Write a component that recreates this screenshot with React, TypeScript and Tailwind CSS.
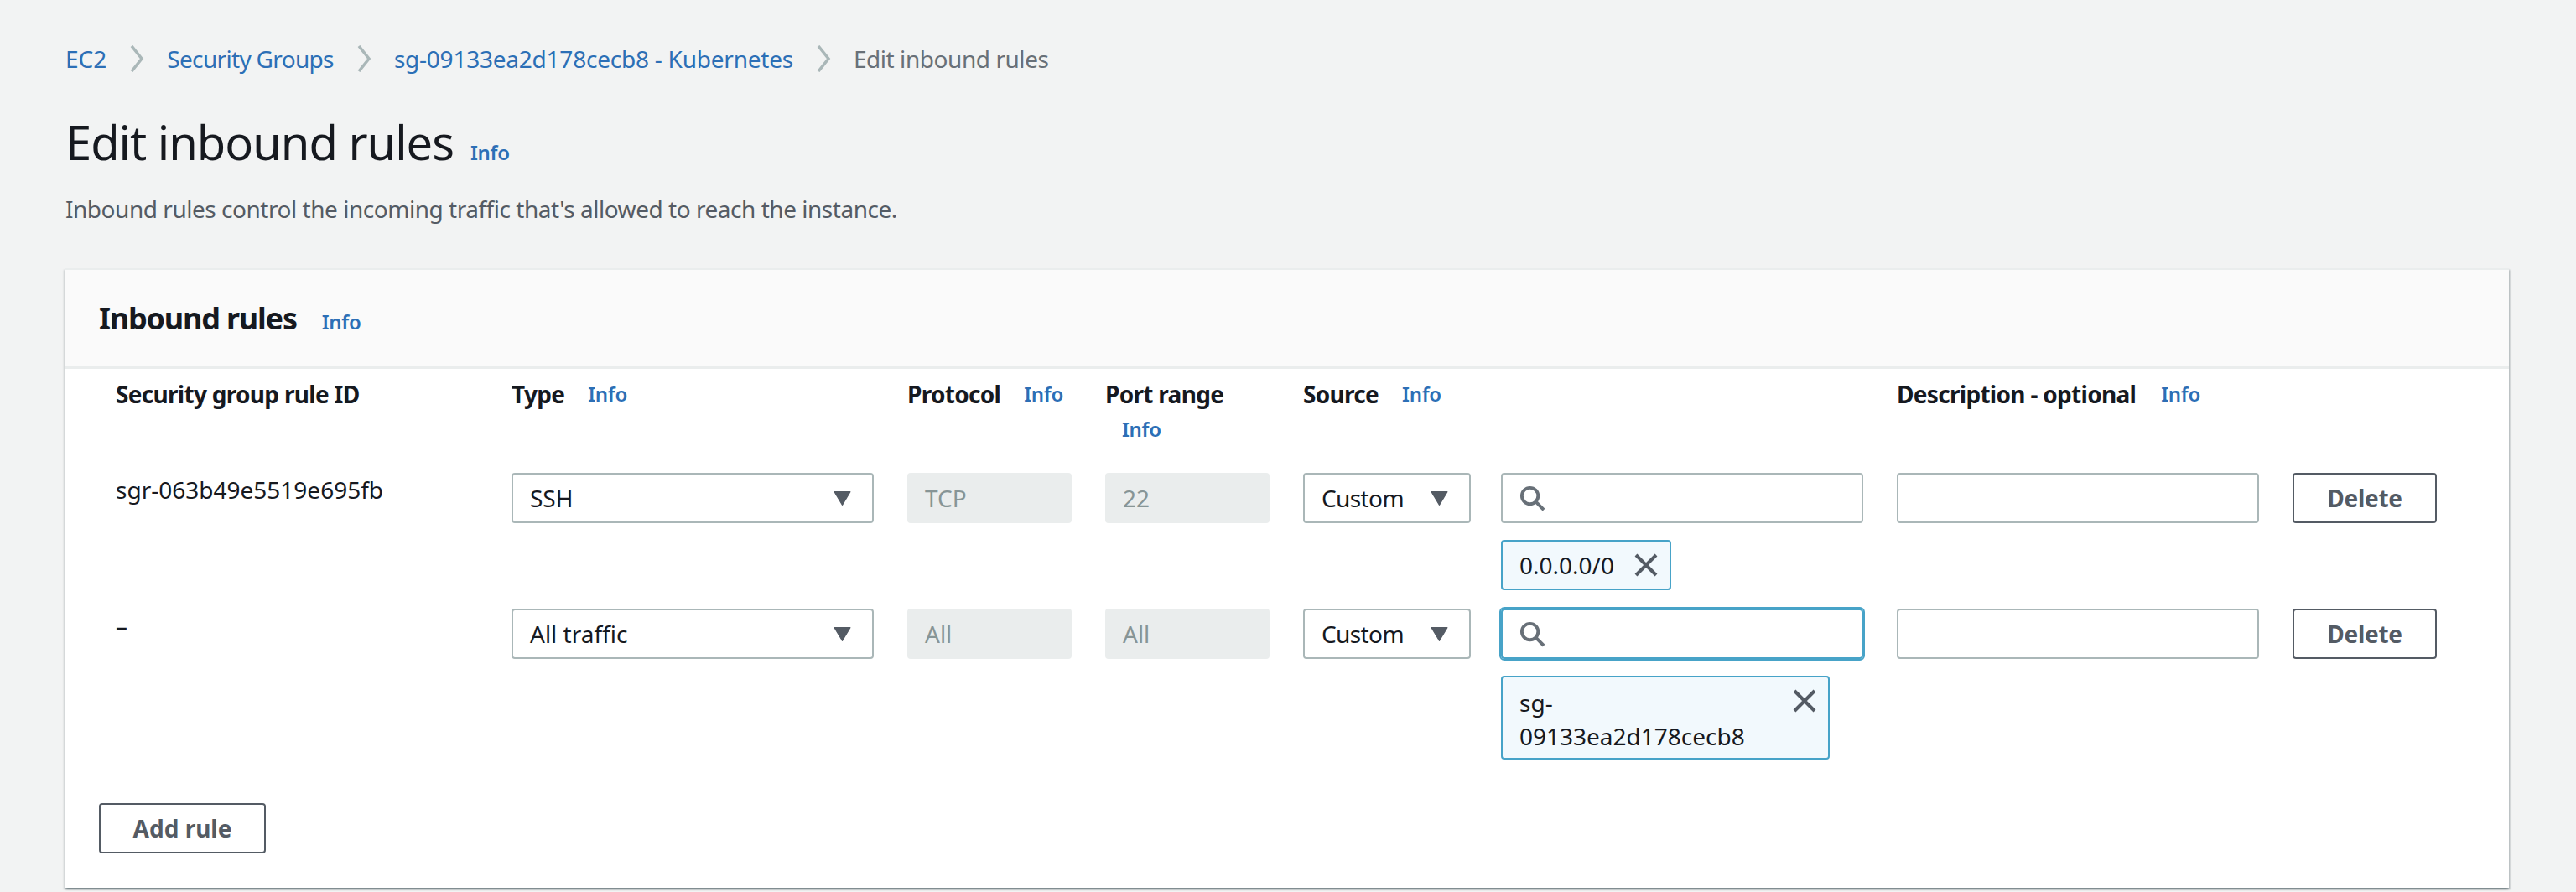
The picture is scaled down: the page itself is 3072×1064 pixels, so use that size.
const link = "text-[#2c6fb6] text-[24px] leading-[32px] font-semibold";

function Info({ className = "" }: { className?: string }) {
  return <a className={`${link} tracking-[-0.3px] ${className}`}>Info</a>;
}

function Chevron() {
  return (
    <svg viewBox="0 0 18 32" className="mx-[27px] h-[32px] w-[18px] shrink-0" fill="none" stroke="#aab7b8" strokeWidth="3.5">
      <path d="M3 1 L15 16 L3 31" />
    </svg>
  );
}

function Caret() {
  return (
    <svg viewBox="0 0 20 16" className="h-[17px] w-[21px] shrink-0">
      <path d="M1 0.5 H19 L10 15.5 Z" fill="#545b64" stroke="#545b64" strokeLinejoin="round" />
    </svg>
  );
}

function Search() {
  return (
    <svg viewBox="0 0 32 32" className="h-[31px] w-[31px] shrink-0" fill="none" stroke="#687078" strokeWidth="4">
      <circle cx="13" cy="13" r="10" />
      <path d="M20 20 L30 30" />
    </svg>
  );
}

function Close() {
  return (
    <svg viewBox="0 0 28 28" className="h-[28px] w-[28px] shrink-0" fill="none" stroke="#545b64" strokeWidth="4">
      <path d="M2 2 L26 26 M26 2 L2 26" />
    </svg>
  );
}

function Select({ value, className = "" }: { value: string; className?: string }) {
  return (
    <div className={`flex h-[60px] items-center justify-between rounded-[4px] border-2 border-[#aab7b8] bg-white pl-[20px] pr-[25px] ${className}`}>
      <span className={value === "Custom" ? "tracking-[-0.6px]" : ""}>{value}</span>
      <Caret />
    </div>
  );
}

function Disabled({ value }: { value: string }) {
  return (
    <div className="flex h-[60px] items-center rounded-[4px] bg-[#eaeded] pl-[21px] text-[#879596]">{value}</div>
  );
}

function Row({ id, type, protocol, port, focused, chip }: { id: string; type: string; protocol: string; port: string; focused?: boolean; chip: React.ReactNode }) {
  return (
    <div className="grid grid-cols-12 gap-x-[40px]">
      <div className="col-span-2">{id}</div>
      <Select value={type} className="col-span-2" />
      <Disabled value={protocol} />
      <Disabled value={port} />
      <Select value="Custom" className="w-[200px]" />
      <div className="col-span-2">
        <div className={`flex h-[60px] items-center rounded-[4px] bg-white pl-[20px] ${focused ? "border-2 border-[#47a3c8] outline-2 outline-[#47a3c8]" : "border-2 border-[#aab7b8]"}`}>
          <Search />
        </div>
        {chip}
      </div>
      <div className="col-span-2 h-[60px] rounded-[4px] border-2 border-[#aab7b8] bg-white" />
      <div>
        <button className="h-[60px] w-[172px] rounded-[4px] border-2 border-[#545b64] bg-white font-bold tracking-[-0.3px] text-[#545b64]">Delete</button>
      </div>
    </div>
  );
}

export default function App() {
  return (
    <div className="min-h-screen w-[3072px] overflow-hidden bg-[#f2f3f3] px-[78px] pt-[49px] font-['Noto_Sans',sans-serif] text-[28px] leading-[40px] text-[#16191f]">
      <nav className="flex h-[42px] items-center text-[#2c6fb6]">
        <a>EC2</a>
        <Chevron />
        <a className="tracking-[-0.67px]">Security Groups</a>
        <Chevron />
        <a className="tracking-[-0.23px]">sg-09133ea2d178cecb8 - Kubernetes</a>
        <Chevron />
        <span className="tracking-[-0.44px] text-[#687078]">Edit inbound rules</span>
      </nav>

      <div className="mt-[46px] flex items-baseline gap-[20px]">
        <h1 className="text-[56px] leading-[64px] font-normal tracking-[-1px]">Edit inbound rules</h1>
        <Info />
      </div>
      <p className="mt-[28px] tracking-[-0.47px] text-[#545b64]">Inbound rules control the incoming traffic that's allowed to reach the instance.</p>

      <section className="mt-[51px] h-[739px] w-[2914px] border-t-2 border-[#eaeded] bg-white shadow-[0_2px_2px_0_rgba(0,28,36,0.3),2px_2px_2px_0_rgba(0,28,36,0.15),-2px_2px_2px_0_rgba(0,28,36,0.15)]">
        <header className="flex h-[118px] items-center gap-[30px] border-b-[3px] border-[#eaeded] bg-[#fafafa] px-[40px]">
          <h2 className="text-[36px] leading-[44px] font-bold tracking-[-1.2px]">Inbound rules</h2>
          <Info className="mt-[8px]" />
        </header>

        <div className="pl-[60px] pr-[62px] pt-[10px]">
          <div className="grid h-[114px] grid-cols-12 gap-x-[40px] font-bold tracking-[-0.7px]">
            <div className="col-span-2">Security group rule ID</div>
            <div className="col-span-2 flex items-start gap-[28px]">Type <Info className="mt-[4px]" /></div>
            <div className="flex items-start gap-[28px]">Protocol <Info className="mt-[4px]" /></div>
            <div className="flex flex-col">Port range <Info className="ml-[20px] mt-[6px]" /></div>
            <div className="col-span-2 flex items-start gap-[28px]">Source <Info className="mt-[4px]" /></div>
            <div />
            <div className="col-span-2 flex items-start gap-[30px]">Description - optional <Info className="mt-[4px]" /></div>
          </div>

          <Row
            id="sgr-063b49e5519e695fb"
            type="SSH"
            protocol="TCP"
            port="22"
            chip={
              <div className="mt-[20px] flex h-[60px] w-[203px] items-center justify-between rounded-[4px] border-2 border-[#47a3c8] bg-[#f2f9fd] pl-[20px] pr-[14px]">
                <span>0.0.0.0/0</span>
                <Close />
              </div>
            }
          />
          <div className="mt-[22px]">
            <Row
              id="–"
              type="All traffic"
              protocol="All"
              port="All"
              focused
              chip={
                <div className="mt-[20px] flex h-[100px] w-[392px] items-start justify-between rounded-[4px] border-2 border-[#47a3c8] bg-[#f2f9fd] pl-[20px] pr-[14px] pt-[10px]">
                  <span className="w-[300px]">sg-<br />09133ea2d178cecb8</span>
                  <span className="mt-[4px]"><Close /></span>
                </div>
              }
            />
          </div>
          <button className="-ml-[20px] mt-[52px] block h-[60px] w-[199px] rounded-[4px] border-2 border-[#545b64] bg-white font-bold text-[#545b64]">Add rule</button>
        </div>
      </section>
    </div>
  );
}
